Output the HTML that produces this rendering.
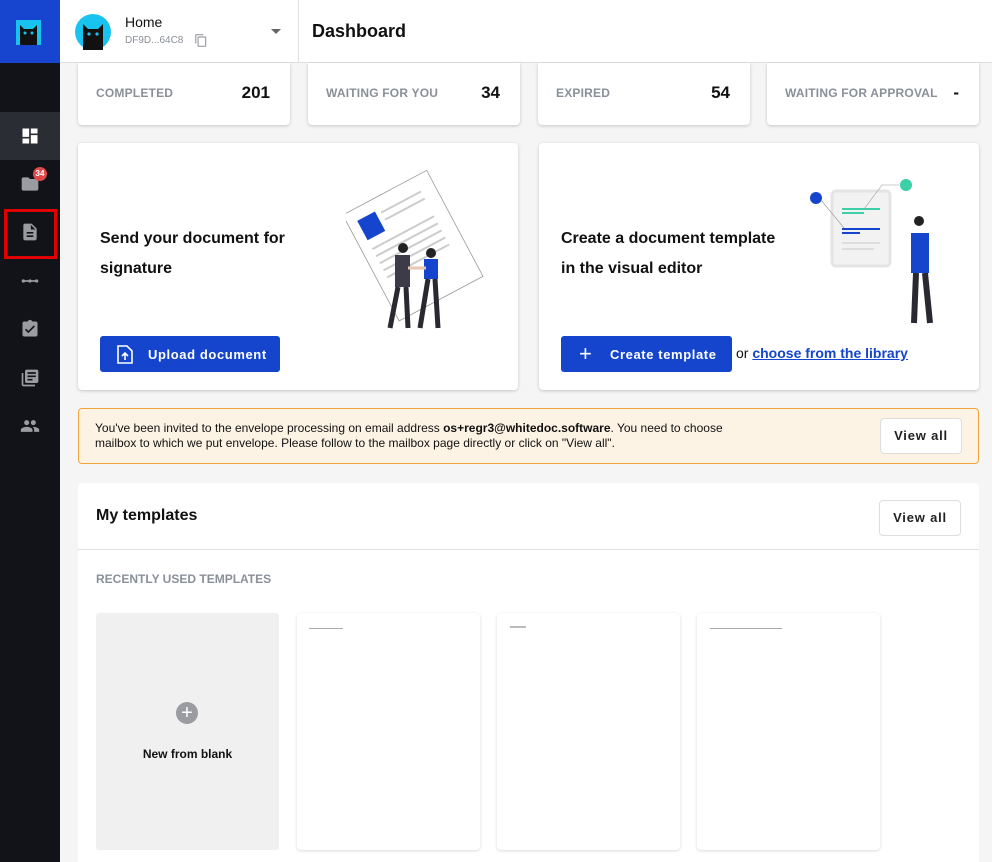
<!DOCTYPE html>
<html style="overflow:hidden"><head><meta charset="utf-8">
<style>
*{box-sizing:border-box;margin:0;padding:0}
html,body{width:992px;height:862px;overflow:hidden}
body{font-family:"Liberation Sans",Arial,sans-serif;background:#f5f5f5;position:relative;color:#111}
.side{position:absolute;left:0;top:0;width:60px;height:862px;background:#111318}
.logo{position:absolute;left:0;top:0;width:60px;height:63px;background:#1845d0}
.hdr{position:absolute;left:60px;top:0;right:0;height:63px;background:#fff;border-bottom:1px solid #e0e0e0}
.card{position:absolute;background:#fff;border-radius:4px;box-shadow:0 1px 3px rgba(0,0,0,.2)}
.stat{top:63px;height:62px;border-radius:0 0 4px 4px}
.stat .l{position:absolute;left:18px;top:23px;font-size:12px;color:#8a8f98;font-weight:bold;letter-spacing:.2px}
.stat .v{position:absolute;right:20px;top:20px;font-size:17px;font-weight:bold;color:#111}
.btn{position:absolute;background:#1445cc;color:#fff;font-size:13px;font-weight:bold;border-radius:3px;letter-spacing:.6px}
.wbtn{position:absolute;background:#fff;border:1px solid #ddd;border-radius:4px;font-size:13px;font-weight:bold;letter-spacing:.8px;text-align:center;line-height:34px;color:#222}
.ic{position:absolute;left:20px;width:20px;height:20px}
.th{position:absolute;top:613px;width:183px;height:237px;background:#fff;border-radius:4px;box-shadow:0 1px 3px rgba(0,0,0,.15)}
</style></head><body>
<div class="side">
 <div class="logo"><svg style="position:absolute;left:16px;top:20px" width="25" height="25"><rect width="25" height="25" fill="#18c3f0"/><path d="M4 5 L8 9 H17 L21 5 V25 H4Z" fill="#111"/><circle cx="9" cy="13" r="1.5" fill="#18c3f0"/><circle cx="16" cy="13" r="1.5" fill="#18c3f0"/></svg></div>
 <div style="position:absolute;top:112px;left:0;width:60px;height:48px;background:#2a2d33"></div>
 <svg class="ic" style="top:126px" viewBox="0 0 24 24"><path d="M3 13h8V3H3v10zm0 8h8v-6H3v6zm10 0h8V11h-8v10zm0-18v6h8V3h-8z" fill="#fff"/></svg>
 <svg class="ic" style="top:174px" viewBox="0 0 24 24"><path d="M10 4H4c-1.1 0-2 .9-2 2v12c0 1.1.9 2 2 2h16c1.1 0 2-.9 2-2V8c0-1.1-.9-2-2-2h-8l-2-2z" fill="#9a9ca1"/></svg>
 <div style="position:absolute;left:33px;top:167px;width:14px;height:14px;border-radius:7px;background:#e04848;color:#fff;font-size:8px;font-weight:bold;text-align:center;line-height:14px">34</div>
 <div style="position:absolute;left:4px;top:209px;width:53px;height:50px;border:3px solid #e00000"></div>
 <svg class="ic" style="top:222px" viewBox="0 0 24 24"><path d="M14 2H6c-1.1 0-2 .9-2 2v16c0 1.1.9 2 2 2h12c1.1 0 2-.9 2-2V8l-6-6zm2 16H8v-2h8v2zm0-4H8v-2h8v2zm-3-5V3.5L18.5 9H13z" fill="#9a9ca1"/></svg>
 <svg class="ic" style="top:271px" viewBox="0 0 24 24"><circle cx="4" cy="12" r="2" fill="#9a9ca1"/><circle cx="12" cy="12" r="2" fill="#9a9ca1"/><circle cx="20" cy="12" r="2" fill="#9a9ca1"/><rect x="4" y="11" width="16" height="2" fill="#9a9ca1"/></svg>
 <svg class="ic" style="top:319px" viewBox="0 0 24 24"><path d="M19 3h-4.2C14.4 1.8 13.3 1 12 1s-2.4.8-2.8 2H5c-1.1 0-2 .9-2 2v14c0 1.1.9 2 2 2h14c1.1 0 2-.9 2-2V5c0-1.1-.9-2-2-2zm-9 14l-4-4 1.4-1.4 2.6 2.6 6.600-6.6L18 9l-8 8z" fill="#9a9ca1"/></svg>
 <svg class="ic" style="top:368px" viewBox="0 0 24 24"><path d="M4 6H2v14c0 1.1.9 2 2 2h14v-2H4V6zm16-4H8c-1.1 0-2 .9-2 2v12c0 1.1.9 2 2 2h12c1.1 0 2-.9 2-2V4c0-1.1-.9-2-2-2zm-1 9H9V9h10v2zm-4 4H9v-2h6v2zm4-8H9V5h10v2z" fill="#9a9ca1"/></svg>
 <svg class="ic" style="top:416px" viewBox="0 0 24 24"><path d="M16 11c1.7 0 3-1.3 3-3s-1.3-3-3-3-3 1.3-3 3 1.3 3 3 3zm-8 0c1.7 0 3-1.3 3-3S9.7 5 8 5 5 6.3 5 8s1.3 3 3 3zm0 2c-2.3 0-7 1.2-7 3.5V19h14v-2.5C15 14.2 10.3 13 8 13zm8 0c-.3 0-.6 0-1 .1 1.2.8 2 2 2 3.4V19h6v-2.5c0-2.3-4.700-3.5-7-3.5z" fill="#9a9ca1"/></svg>
</div>
<div class="hdr">
 <svg style="position:absolute;left:15px;top:14px" width="36" height="36"><circle cx="18" cy="18" r="18" fill="#18c3f0"/><path d="M8 10 L13 15 H23 L28 10 V36 H8Z" fill="#111"/><circle cx="14" cy="20" r="1.6" fill="#18c3f0"/><circle cx="22" cy="20" r="1.6" fill="#18c3f0"/></svg>
 <div style="position:absolute;left:65px;top:14px;font-size:14px;color:#111">Home</div>
 <div style="position:absolute;left:65px;top:35px;font-size:10px;color:#8a8f98">DF9D...64C8</div>
 <svg style="position:absolute;left:134px;top:33px" width="14" height="15" viewBox="0 0 24 24"><path d="M16 1H4c-1.1 0-2 .9-2 2v14h2V3h12V1zm3 4H8c-1.1 0-2 .9-2 2v14c0 1.1.9 2 2 2h11c1.1 0 2-.9 2-2V7c0-1.1-.9-2-2-2zm0 16H8V7h11v14z" fill="#9a9ca1"/></svg>
 <div style="position:absolute;left:211px;top:29px;border-left:5px solid transparent;border-right:5px solid transparent;border-top:5px solid #666"></div>
 <div style="position:absolute;left:238px;top:0;width:1px;height:63px;background:#e0e0e0"></div>
 <div style="position:absolute;left:252px;top:21px;font-size:18px;font-weight:bold;color:#111">Dashboard</div>
</div>

<div class="card stat" style="left:78px;width:212px"><span class="l">COMPLETED</span><span class="v">201</span></div>
<div class="card stat" style="left:308px;width:212px"><span class="l">WAITING FOR YOU</span><span class="v">34</span></div>
<div class="card stat" style="left:538px;width:212px"><span class="l">EXPIRED</span><span class="v">54</span></div>
<div class="card stat" style="left:767px;width:212px"><span class="l">WAITING FOR APPROVAL</span><span class="v">-</span></div>

<div class="card" style="left:78px;top:143px;width:440px;height:247px">
 <div style="position:absolute;left:22px;top:81px;font-size:16px;font-weight:bold;line-height:30px">Send your document for<br>signature</div>
 <div class="btn" style="left:22px;top:193px;width:180px;height:36px"><svg style="position:absolute;left:17px;top:9px" width="16" height="19" viewBox="0 0 16 19"><path d="M1 1h9l5 5v12H1z" fill="none" stroke="#fff" stroke-width="1.6"/><path d="M8 15V9M5 11l3-3 3 3" stroke="#fff" stroke-width="1.6" fill="none"/></svg><span style="position:absolute;left:48px;top:11px">Upload document</span></div>
 <svg style="position:absolute;left:268px;top:25px" width="150" height="165">
  <g transform="rotate(-28 60 70)"><rect x="15" y="20" width="95" height="120" fill="#fff" stroke="#999" stroke-width=".8"/><rect x="25" y="32" width="20" height="22" fill="#1445cc"/><g stroke="#ccc" stroke-width="2"><line x1="50" y1="36" x2="95" y2="36"/><line x1="50" y1="44" x2="95" y2="44"/><line x1="25" y1="64" x2="95" y2="64"/><line x1="25" y1="72" x2="95" y2="72"/><line x1="25" y1="80" x2="95" y2="80"/><line x1="25" y1="88" x2="95" y2="88"/><line x1="25" y1="96" x2="95" y2="96"/></g></g>
  <circle cx="57" cy="80" r="5" fill="#222"/><rect x="49" y="87" width="15" height="32" fill="#3d3b48"/><path d="M52 119 L44 160 M60 119 L62 160" stroke="#2a2830" stroke-width="5"/>
  <circle cx="85" cy="85" r="5" fill="#222"/><rect x="78" y="91" width="14" height="20" fill="#1445cc"/><path d="M82 111 L74 160 M89 111 L92 160" stroke="#2a2830" stroke-width="5"/>
  <line x1="62" y1="100" x2="80" y2="100" stroke="#e8c6b0" stroke-width="3"/>
 </svg>
</div>
<div class="card" style="left:539px;top:143px;width:440px;height:247px">
 <div style="position:absolute;left:22px;top:81px;font-size:16px;font-weight:bold;line-height:30px">Create a document template<br>in the visual editor</div>
 <div class="btn" style="left:22px;top:193px;width:171px;height:36px"><span style="position:absolute;left:18px;top:5px;font-size:22px;font-weight:normal">+</span><span style="position:absolute;left:49px;top:11px">Create template</span></div>
 <div style="position:absolute;left:197px;top:202px;font-size:14px;color:#111">or <span style="color:#1445cc;text-decoration:underline;font-weight:bold">choose from the library</span></div>
 <svg style="position:absolute;left:265px;top:30px" width="160" height="160">
  <rect x="28" y="18" width="58" height="75" rx="4" fill="#f2f2f2" stroke="#e4e4e4" stroke-width="3"/>
  <g stroke-width="2"><line x1="38" y1="36" x2="76" y2="36" stroke="#3ccfa8"/><line x1="38" y1="40" x2="60" y2="40" stroke="#3ccfa8"/><line x1="38" y1="56" x2="76" y2="56" stroke="#1445cc"/><line x1="38" y1="60" x2="56" y2="60" stroke="#1445cc"/><line x1="38" y1="70" x2="76" y2="70" stroke="#ddd"/><line x1="38" y1="76" x2="70" y2="76" stroke="#ddd"/></g>
  <circle cx="12" cy="25" r="6" fill="#1445cc"/><circle cx="102" cy="12" r="6" fill="#3ccfa8"/>
  <path d="M17 27 L40 55 M95 12 H78 L60 36" stroke="#999" stroke-width=".6" fill="none"/>
  <circle cx="115" cy="48" r="5" fill="#222"/><rect x="107" y="60" width="18" height="40" fill="#1445cc"/><path d="M112 100 L110 150 M121 100 L126 150" stroke="#2a2830" stroke-width="6"/>
 </svg>
</div>

<div style="position:absolute;left:78px;top:408px;width:901px;height:56px;background:#fdf3e4;border:1px solid #f0a53a;border-radius:4px">
 <div style="position:absolute;left:16px;top:12px;font-size:12px;line-height:15px;color:#111">You've been invited to the envelope processing on email address <b>os+regr3@whitedoc.software</b>. You need to choose<br>mailbox to which we put envelope. Please follow to the mailbox page directly or click on "View all".</div>
 <div class="wbtn" style="left:801px;top:9px;width:82px;height:36px">View all</div>
</div>

<div class="card" style="left:78px;top:483px;width:901px;height:379px;box-shadow:none;border-radius:4px 4px 0 0">
 <div style="position:absolute;left:18px;top:24px;font-size:16px;font-weight:bold">My templates</div>
 <div class="wbtn" style="left:801px;top:17px;width:82px;height:36px">View all</div>
 <div style="position:absolute;left:0;top:66px;width:901px;height:1px;background:#e0e0e0"></div>
 <div style="position:absolute;left:18px;top:89px;font-size:12px;font-weight:bold;color:#8a8f98">RECENTLY USED TEMPLATES</div>
</div>
<div style="position:absolute;left:96px;top:613px;width:183px;height:237px;background:#f0f0f1;border-radius:3px">
 <div style="position:absolute;left:80px;top:89px;width:22px;height:22px;border-radius:11px;background:#9a9ca1;color:#fff;font-size:20px;text-align:center;line-height:22px">+</div>
 <div style="position:absolute;left:0;width:183px;top:134px;text-align:center;font-size:12px;font-weight:bold">New from blank</div>
</div>
<div class="th" style="left:297px"><div style="position:absolute;left:12px;top:15px;width:34px;height:1px;background:#aaa"></div></div>
<div class="th" style="left:497px"><div style="position:absolute;left:13px;top:13px;width:16px;height:2px;background:#bbb"></div></div>
<div class="th" style="left:697px"><div style="position:absolute;left:13px;top:15px;width:72px;height:1px;background:#aaa"></div></div>
</body></html>
